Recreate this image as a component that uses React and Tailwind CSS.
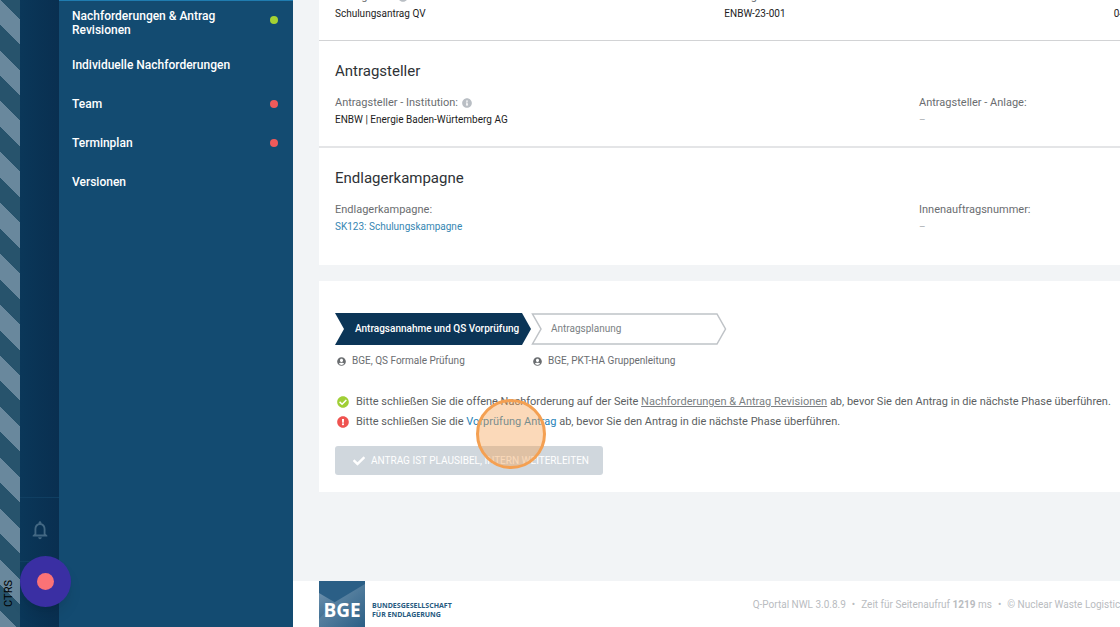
import React from 'react';
import { FaCheck, FaCheckCircle, FaExclamationCircle, FaInfoCircle, FaUserCircle } from 'react-icons/fa';
import { MdNotificationsNone } from 'react-icons/md';

const navItems = [
  { label: 'Nachforderungen & Antrag Revisionen', status: 'ok' },
  { label: 'Individuelle Nachforderungen' },
  { label: 'Team', status: 'open' },
  { label: 'Terminplan', status: 'open' },
  { label: 'Versionen' },
];

function Sidebar() {
  return (
    <aside className="relative flex w-[293px] shrink-0 bg-[#134b71] text-white">
      <div className="w-5 shrink-0 bg-[repeating-linear-gradient(45deg,#69889d_0px,#69889d_12px,#27536c_12px,#27536c_30px,#69889d_30px,#69889d_36px)]" />
      <div className="flex w-[39px] shrink-0 flex-col justify-end bg-linear-to-r from-[#0a3759] to-[#092f50]">
        <button
          aria-label="Benachrichtigungen"
          className="flex h-[65px] items-center justify-center border-y border-[#103f62] text-[#436883]"
        >
          <MdNotificationsNone size={22} />
        </button>
        <div className="h-[65px]" />
      </div>
      <nav className="flex flex-1 flex-col border-t border-[#1f7cb0]">
        {navItems.map((item) => (
          <a
            key={item.label}
            href="#"
            className="flex items-start justify-between py-3 pr-[15px] pl-[13px] text-xs leading-[15px] font-medium first:pt-2 first:pb-[9px] first:leading-[14px]"
          >
            <span className="w-[165px]">{item.label}</span>
            {item.status && (
              <span
                className={
                  item.status === 'ok'
                    ? 'mt-[7px] size-2 rounded-full bg-[#a4d233]'
                    : 'mt-[3px] size-2 rounded-full bg-[#f05a5a]'
                }
              />
            )}
          </a>
        ))}
      </nav>
      <span className="absolute bottom-5 left-[2px] rotate-180 text-[11px] leading-[14px] text-black [writing-mode:vertical-rl]">
        CTRS
      </span>
      <button
        aria-label="Aufnahme"
        className="absolute bottom-5 left-5 flex size-[51px] items-center justify-center rounded-full bg-[#3a2fa3] shadow-lg"
      >
        <span className="size-[17px] rounded-full bg-[#fb7276]" />
      </button>
    </aside>
  );
}

function Field({ label, info, children }) {
  return (
    <div className="leading-[17px]">
      <dt className="flex items-center gap-1 text-[11px] text-[#6a6d70]">
        {label}
        {info && <FaInfoCircle size={10} className="text-[#b9bec4]" />}
      </dt>
      <dd className="text-[10px] text-[#1d1d1d]">{children}</dd>
    </div>
  );
}

function Empty() {
  return <span className="text-[#b0b4b8]">–</span>;
}

function Heading({ children }) {
  return <h2 className="mb-[11px] text-[15px] leading-6 text-[#2e3236]">{children}</h2>;
}

function Details() {
  return (
    <section className="bg-white">
      <dl className="-mt-3 grid grid-cols-3 border-b border-[#d2d3d5] px-4 pb-[18px]">
        <Field label="Antragstitel:" info>Schulungsantrag QV</Field>
        <Field label="Antragsnummer:">ENBW-23-001</Field>
        <Field label="Datum:">04.05.2023</Field>
      </dl>
      <div className="border-b-2 border-[#e4e5e7] px-4 py-[18px]">
        <Heading>Antragsteller</Heading>
        <dl className="grid grid-cols-2">
          <Field label="Antragsteller - Institution:" info>ENBW | Energie Baden-Würtemberg AG</Field>
          <Field label="Antragsteller - Anlage:"><Empty /></Field>
        </dl>
      </div>
      <div className="px-4 pt-[18px] pb-[30px]">
        <Heading>Endlagerkampagne</Heading>
        <dl className="grid grid-cols-2">
          <Field label="Endlagerkampagne:">
            <a href="#" className="text-[#3586b2]">SK123: Schulungskampagne</a>
          </Field>
          <Field label="Innenauftragsnummer:"><Empty /></Field>
        </dl>
      </div>
    </section>
  );
}

function Step({ title, role, active }) {
  return (
    <li className="w-[196px] text-[10px]">
      <div className="relative h-8">
        <svg viewBox="0 0 196 32" className="absolute inset-0 h-8 w-[196px]">
          {active ? (
            <path d="M0 0H187L196 16L187 32H0L9 16Z" fill="#0b3557" />
          ) : (
            <path d="M1.500 1H186L194.500 16L186 31H1.500L10 16Z" fill="#fff" stroke="#bfc3c7" strokeWidth="1.500" />
          )}
        </svg>
        <span
          className={
            active
              ? 'relative pl-5 leading-8 font-medium whitespace-nowrap text-white'
              : 'relative pl-5 leading-8 whitespace-nowrap text-[#7b7f83]'
          }
        >
          {title}
        </span>
      </div>
      <div className="mt-2 flex items-center gap-[6px] pl-[2px] leading-4 whitespace-nowrap text-[#6a6d70]">
        <FaUserCircle size={9} />
        {role}
      </div>
    </li>
  );
}

function Workflow() {
  return (
    <section className="relative mt-4 bg-white px-4 pt-8 pb-[17px]">
      <ol className="flex">
        <Step title="Antragsannahme und QS Vorprüfung" role="BGE, QS Formale Prüfung" active />
        <Step title="Antragsplanung" role="BGE, PKT-HA Gruppenleitung" />
      </ol>
      <ul className="mt-[23px] pl-[2px] text-[11px] leading-5 whitespace-nowrap text-[#5c5f62]">
        <li className="flex items-center gap-[7px]">
          <FaCheckCircle size={12} className="text-[#a0cf36]" />
          <span>
            Bitte schließen Sie die offene Nachforderung auf der Seite{' '}
            <a href="#" className="text-[#7b7f83] underline">Nachforderungen &amp; Antrag Revisionen</a>
            {' '}ab, bevor Sie den Antrag in die nächste Phase überführen.
          </span>
        </li>
        <li className="flex items-center gap-[7px]">
          <FaExclamationCircle size={12} className="text-[#ef5350]" />
          <span>
            Bitte schließen Sie die <a href="#" className="text-[#1f82b8]">Vorprüfung Antrag</a> ab, bevor Sie den
            Antrag in die nächste Phase überführen.
          </span>
        </li>
      </ul>
      <button
        disabled
        className="mt-[14px] flex h-[29px] items-center gap-[6px] rounded-[3px] bg-[#d0d7dd] pr-[14px] pl-[18px] text-[10px] text-white uppercase"
      >
        <FaCheck size={12} />
        Antrag ist plausibel, intern weiterleiten
      </button>
      {/* click marker */}
      <span className="pointer-events-none absolute top-[118px] left-[157px] size-[70px] rounded-full border-3 border-[#f4a052] bg-[#f5a04f]/40" />
    </section>
  );
}

function Logo() {
  return (
    <div className="flex items-center gap-[7px]">
      <svg viewBox="0 0 46 46" className="size-[46px]">
        <defs>
          <linearGradient id="logoLeft" x1="0" y1="0" x2="0.300" y2="1">
            <stop offset="0" stopColor="#6d90ac" />
            <stop offset="1" stopColor="#2f648b" />
          </linearGradient>
          <linearGradient id="logoRight" x1="0" y1="0" x2="1" y2="1">
            <stop offset="0" stopColor="#7496b0" />
            <stop offset="1" stopColor="#2b5f86" />
          </linearGradient>
        </defs>
        <rect width="46" height="46" fill="#2b5f86" />
        <path d="M0 12L22 25L0 46Z" fill="url(#logoLeft)" />
        <path d="M16 21L46 3V46H0V38Z" fill="url(#logoRight)" />
        <text x="23" y="36" textAnchor="middle" fill="#fff" fontFamily="Open Sans, sans-serif" fontSize="19" fontWeight="700">
          BGE
        </text>
      </svg>
      <p className="pt-3 font-['Open_Sans',sans-serif] text-[7px] leading-[9px] font-bold text-[#275a80]">
        BUNDESGESELLSCHAFT
        <br />
        FÜR ENDLAGERUNG
      </p>
    </div>
  );
}

function Footer() {
  return (
    <footer className="flex min-w-[1226px] shrink-0 items-center bg-white pr-4 pl-[26px]">
      <Logo />
      <p className="ml-[301px] flex gap-[6px] text-[10px] whitespace-nowrap text-[#b9bcbf]">
        <span>Q-Portal NWL 3.0.8.9</span>
        <span>•</span>
        <span>Zeit für Seitenaufruf <b>1219</b> ms</span>
        <span>•</span>
        <span>© Nuclear Waste Logistics</span>
      </p>
    </footer>
  );
}

export default function App() {
  return (
    <div className="flex h-screen overflow-hidden bg-[#f2f4f6] font-[Roboto,sans-serif]">
      <Sidebar />
      <div className="flex min-w-0 flex-1 flex-col overflow-hidden">
        <main className="min-w-[1226px] flex-1 pl-[26px]">
          <Details />
          <Workflow />
        </main>
        <Footer />
      </div>
    </div>
  );
}
